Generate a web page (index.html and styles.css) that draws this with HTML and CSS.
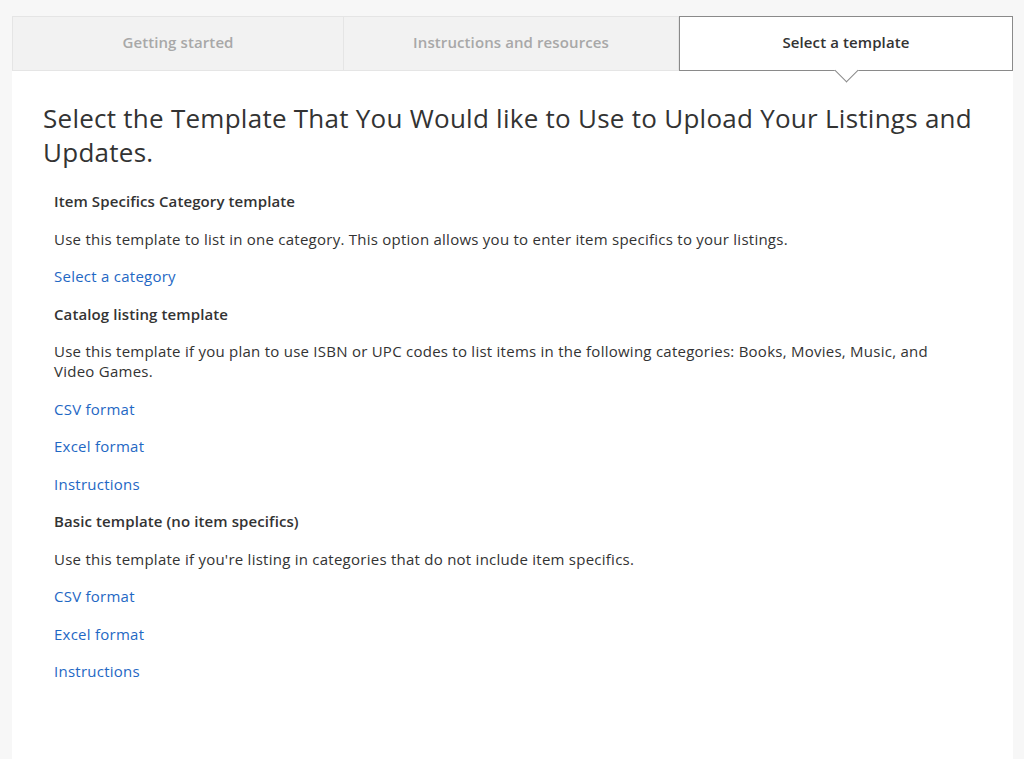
FILE: index.html
```html
<!DOCTYPE html>
<html lang="en">
<head>
  <meta charset="UTF-8" />
  <title>Select a template</title>
  <link rel="stylesheet" href="styles.css">
</head>
<body>

  <main class="card">
    <nav class="steps">
      <div class="step">Getting started</div>
      <div class="step">Instructions and resources</div>
      <div class="step activo">Select a template</div>
    </nav>

    <div class="contenido">
      <h1>Select the Template That You Would like to Use to Upload Your Listings and Updates.</h1>

      <section class="plantilla">
        <h3>Item Specifics Category template</h3>
        <p>Use this template to list in one category. This option allows you to enter item specifics to your listings.</p>
        <p><a href="#">Select a category</a></p>
      </section>

      <section class="plantilla">
        <h3>Catalog listing template</h3>
        <p>Use this template if you plan to use ISBN or UPC codes to list items in the following categories: Books, Movies, Music, and Video Games.</p>
        <p><a href="#">CSV format</a></p>
        <p><a href="#">Excel format</a></p>
        <p><a href="#">Instructions</a></p>
      </section>

      <section class="plantilla">
        <h3>Basic template (no item specifics)</h3>
        <p>Use this template if you're listing in categories that do not include item specifics.</p>
        <p><a href="#">CSV format</a></p>
        <p><a href="#">Excel format</a></p>
        <p><a href="#">Instructions</a></p>
      </section>
    </div>
  </main>

</body>
</html>
```

FILE: styles.css
```css
:root {
  --color-fondo: #f7f7f7;
  --color-texto: #333;
  --color-enlace: #1f68c4;
  --color-borde: #e5e5e5;
}

* {
  box-sizing: border-box;
}

body {
  margin: 0;
  font-family: "Open Sans", "Liberation Sans", sans-serif;
  background: var(--color-fondo);
  color: var(--color-texto);
  padding: 16px 11px 0 12px;
  min-height: 100vh;
}

main.card {
  background: #fff;
  min-height: 743px;
}

.steps {
  display: grid;
  grid-template-columns: 332px 335px 1fr;
}

.step {
  height: 55px;
  padding-bottom: 3px;
  display: flex;
  align-items: center;
  justify-content: center;
  background: #f2f2f2;
  border: 1px solid var(--color-borde);
  border-left: none;
  color: #a8a8a8;
  font-size: 15px;
  font-weight: 600;
  letter-spacing: 0.1px;
}

.step:first-child {
  border-left: 1px solid var(--color-borde);
}

.step.activo {
  position: relative;
  background: #fff;
  color: #333;
  border: 1px solid #8a8a8a;
}

.step.activo::after {
  content: "";
  position: absolute;
  left: 50%;
  bottom: -9px;
  width: 16px;
  height: 16px;
  margin-left: -8px;
  background: #fff;
  border-right: 1px solid #8a8a8a;
  border-bottom: 1px solid #8a8a8a;
  transform: rotate(45deg);
}

.contenido {
  padding: 30px 30px 40px 31px;
}

h1 {
  margin: 0 0 22px;
  font-size: 26px;
  font-weight: 400;
  line-height: 34px;
  letter-spacing: 0.26px;
  color: #333;
}

.plantilla {
  padding: 0 25px 0 11px;
}

.plantilla h3,
.plantilla p {
  margin: 0 0 17.5px;
  font-size: 15px;
  line-height: 20px;
  letter-spacing: 0.25px;
}

.plantilla h3 {
  font-weight: 600;
  letter-spacing: 0.1px;
}

a {
  color: var(--color-enlace);
  text-decoration: none;
}
```
